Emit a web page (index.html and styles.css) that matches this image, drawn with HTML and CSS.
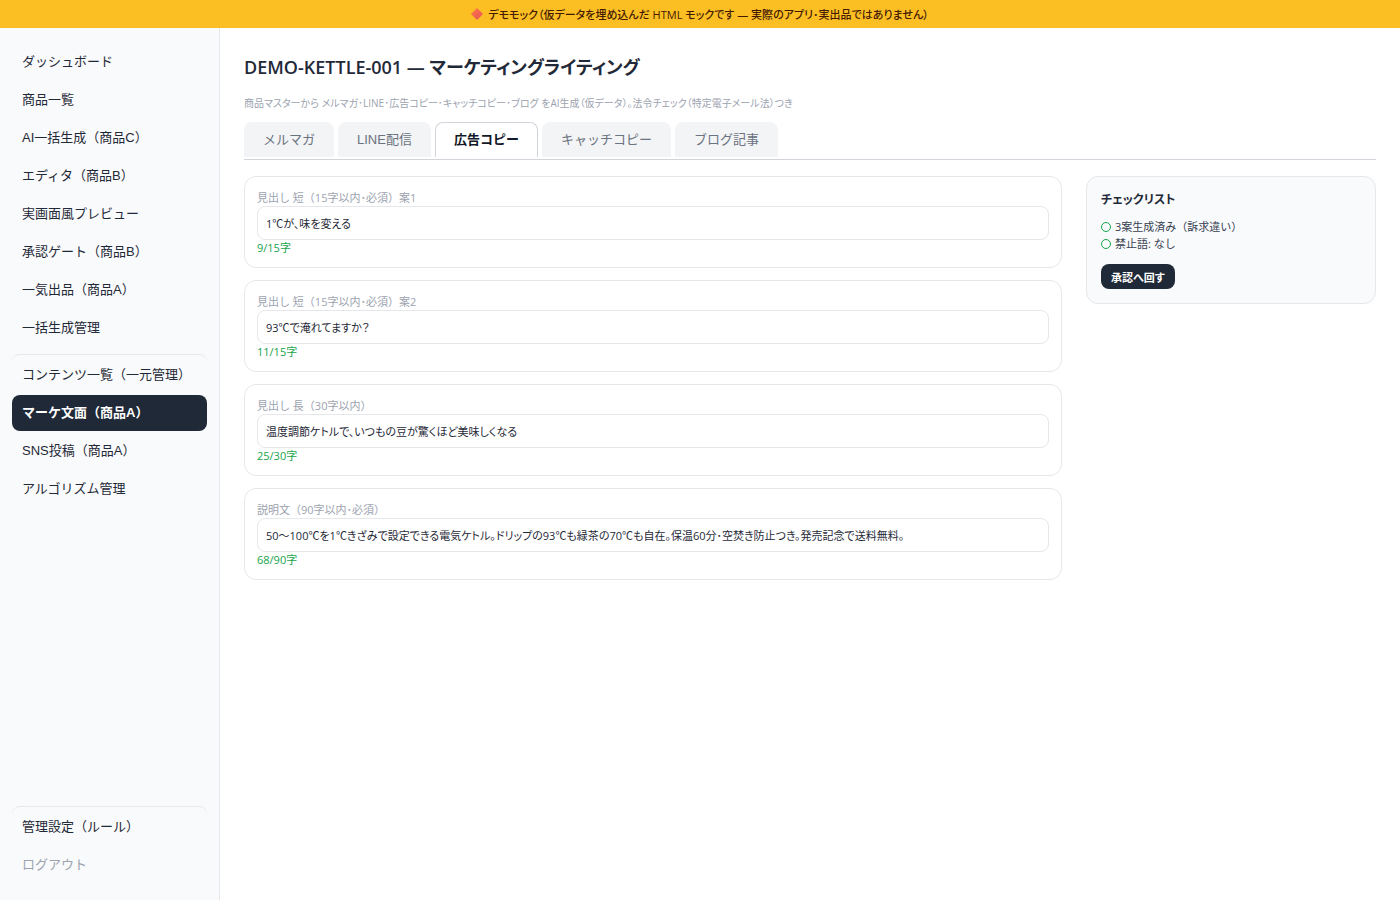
FILE: index.html
```html
<!DOCTYPE html>
<html lang="ja">
<head>
<meta charset="utf-8">
<meta name="viewport" content="width=device-width, initial-scale=1">
<title>DEMO-KETTLE-001 — マーケティングライティング</title>
<link rel="stylesheet" href="styles.css">
</head>
<body>
<div class="banner">
  <svg class="banner-icon" viewBox="0 0 12 12" aria-hidden="true"><defs><linearGradient id="diamond" x1="0" y1="0" x2="1" y2="1"><stop offset="0" stop-color="#fb7a45"/><stop offset="1" stop-color="#e8505b"/></linearGradient></defs><path d="M6 0 12 6 6 12 0 6Z" fill="url(#diamond)"/></svg>
  <span>デモモック（仮データを埋め込んだ HTML モックです — 実際のアプリ･実出品ではありません）</span>
</div>
<div class="layout">
  <nav class="sidebar">
    <a class="nav-item" href="#">ダッシュボード</a>
    <a class="nav-item" href="#">商品一覧</a>
    <a class="nav-item" href="#">AI一括生成（商品C）</a>
    <a class="nav-item" href="#">エディタ（商品B）</a>
    <a class="nav-item" href="#">実画面風プレビュー</a>
    <a class="nav-item" href="#">承認ゲート（商品B）</a>
    <a class="nav-item" href="#">一気出品（商品A）</a>
    <a class="nav-item" href="#">一括生成管理</a>
    <a class="nav-item divided" href="#">コンテンツ一覧（一元管理）</a>
    <a class="nav-item active" href="#" aria-current="page">マーケ文面（商品A）</a>
    <a class="nav-item" href="#">SNS投稿（商品A）</a>
    <a class="nav-item" href="#">アルゴリズム管理</a>
    <div class="spacer"></div>
    <a class="nav-item divided" href="#">管理設定（ルール）</a>
    <a class="nav-item muted" href="#">ログアウト</a>
  </nav>
  <main class="main">
    <h1 class="title">DEMO-KETTLE-001 — マーケティングライティング</h1>
    <p class="subtitle">商品マスターから メルマガ･LINE･広告コピー･キャッチコピー･ブログ をAI生成（仮データ）。法令チェック（特定電子メール法）つき</p>
    <div class="tabs" role="tablist">
      <button class="tab" type="button" role="tab">メルマガ</button>
      <button class="tab" type="button" role="tab">LINE配信</button>
      <button class="tab selected" type="button" role="tab" aria-selected="true">広告コピー</button>
      <button class="tab" type="button" role="tab">キャッチコピー</button>
      <button class="tab" type="button" role="tab">ブログ記事</button>
    </div>
    <div class="columns">
      <div class="cards">
        <section class="card">
          <label class="label" for="short1">見出し 短（15字以内･必須）案1</label>
          <input class="field" id="short1" type="text" value="1℃が、味を変える">
          <div class="count">9/15字</div>
        </section>
        <section class="card">
          <label class="label" for="short2">見出し 短（15字以内･必須）案2</label>
          <input class="field" id="short2" type="text" value="93℃で淹れてますか？">
          <div class="count">11/15字</div>
        </section>
        <section class="card">
          <label class="label" for="long">見出し 長（30字以内）</label>
          <input class="field" id="long" type="text" value="温度調節ケトルで、いつもの豆が驚くほど美味しくなる">
          <div class="count">25/30字</div>
        </section>
        <section class="card">
          <label class="label" for="desc">説明文（90字以内･必須）</label>
          <input class="field" id="desc" type="text" value="50〜100℃を1℃きざみで設定できる電気ケトル。ドリップの93℃も緑茶の70℃も自在。保温60分･空焚き防止つき。発売記念で送料無料。">
          <div class="count">68/90字</div>
        </section>
      </div>
      <aside class="checklist">
        <h2 class="check-title">チェックリスト</h2>
        <ul class="checks">
          <li class="check">3案生成済み（訴求違い）</li>
          <li class="check">禁止語: なし</li>
        </ul>
        <button class="submit" type="button">承認へ回す</button>
      </aside>
    </div>
  </main>
</div>
</body>
</html>
```
FILE: styles.css
```css
* {
  box-sizing: border-box;
}

body {
  margin: 0;
  min-height: 100vh;
  display: flex;
  flex-direction: column;
  background: #fff;
  color: #1f2937;
  font-family: "Open Sans", "Noto Sans CJK JP", sans-serif;
  font-size: 11px;
  font-feature-settings: "palt";
}

button,
input {
  font-family: inherit;
  font-feature-settings: inherit;
}

.banner {
  display: flex;
  align-items: center;
  justify-content: center;
  gap: 5px;
  height: 28px;
  background: #fbbf24;
  color: #451a03;
  font-weight: 500;
}

.banner-icon {
  width: 12px;
  height: 12px;
}

.layout {
  flex: 1;
  display: flex;
}

.sidebar {
  flex: 0 0 220px;
  display: flex;
  flex-direction: column;
  gap: 2px;
  padding: 16px 12px 17px;
  background: #f9fafb;
  border-right: 1px solid #e5e7eb;
  font-family: "Liberation Sans", "Noto Sans CJK JP", sans-serif;
  font-size: 13px;
  font-feature-settings: normal;
}

.nav-item {
  padding: 8px 10px;
  border-radius: 8px;
  color: #1f2937;
  line-height: 20px;
  text-decoration: none;
  white-space: nowrap;
}

.divided {
  margin-top: 6px;
  padding-top: 10px;
  border-top: 1px solid #e5e7eb;
}

.active {
  background: #1f2937;
  color: #fff;
  font-weight: 700;
}

.muted {
  color: #9ca3af;
}

.spacer {
  flex: 1;
}

.main {
  flex: 1;
  min-width: 0;
  padding: 24px;
}

.title {
  margin: 0 0 12px;
  font-size: 18px;
  font-weight: 600;
  line-height: 30px;
}

.subtitle {
  margin: 0 0 10px;
  color: #9ca3af;
  font-size: 10px;
  line-height: 18px;
}

.tabs {
  display: flex;
  gap: 4px;
  padding-bottom: 2px;
  margin-bottom: 16px;
  border-bottom: 1px solid #d1d5db;
}

.tab {
  height: 35px;
  padding: 0 18px 3px;
  border: 1px solid #f3f4f6;
  border-bottom: 0;
  border-radius: 8px 8px 0 0;
  background: #f3f4f6;
  color: #6b7280;
  font-family: "Liberation Sans", "Noto Sans CJK JP", sans-serif;
  font-size: 13px;
  font-feature-settings: normal;
}

.selected {
  border-color: #d1d5db;
  background: #fff;
  color: #111827;
  font-weight: 700;
}

.columns {
  display: grid;
  grid-template-columns: minmax(0, 1fr) 290px;
  gap: 24px;
  align-items: start;
}

.cards {
  display: flex;
  flex-direction: column;
  gap: 12px;
}

.card {
  padding: 12px;
  border: 1px solid #e5e7eb;
  border-radius: 12px;
}

.label {
  display: block;
  color: #9ca3af;
  font-size: 11px;
  font-feature-settings: normal;
  line-height: 17px;
}

.field {
  display: block;
  width: 100%;
  height: 34px;
  padding: 0 8px;
  border: 1px solid #e5e7eb;
  border-radius: 8px;
  background: #fff;
  color: #1f2937;
  font-size: 11px;
}

.count {
  color: #16a34a;
  font-size: 11px;
  line-height: 15px;
}

.checklist {
  padding: 14px;
  border: 1px solid #e5e7eb;
  border-radius: 12px;
  background: #f9fafb;
}

.check-title {
  margin: 0 0 10px;
  font-size: 12px;
  font-weight: 600;
  line-height: 17px;
}

.checks {
  margin: 0 0 12px;
  padding: 0;
  list-style: none;
}

.check {
  display: flex;
  align-items: center;
  gap: 4px;
  color: #374151;
  font-size: 11px;
  font-feature-settings: normal;
  line-height: 17px;
}

.check::before {
  content: "";
  width: 8px;
  height: 8px;
  border: 1px solid #16a34a;
  border-radius: 50%;
}

.submit {
  display: block;
  height: 25px;
  padding: 0 10px;
  border: 0;
  border-radius: 8px;
  background: #1f2937;
  color: #fff;
  font-size: 11px;
  font-weight: 700;
}
```
